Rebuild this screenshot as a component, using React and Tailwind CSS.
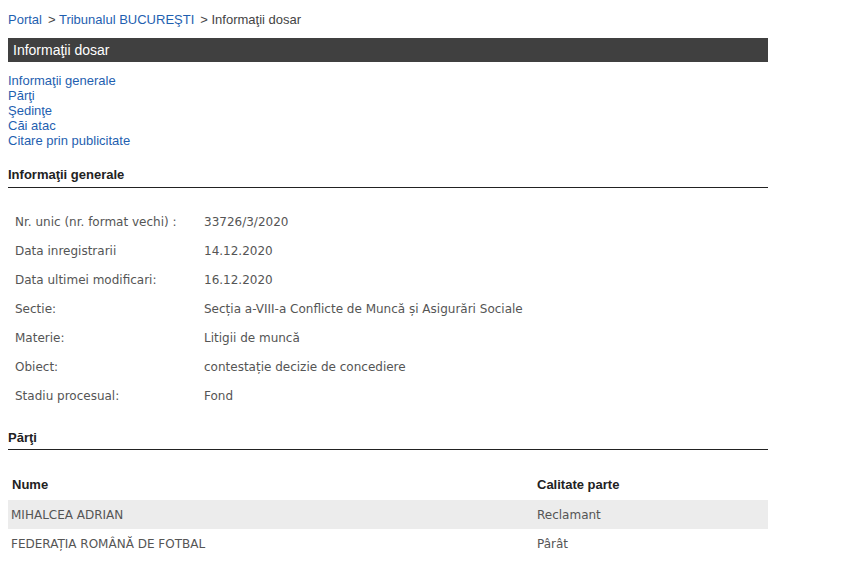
import React from 'react';

const rows = [
  ['Nr. unic (nr. format vechi) :', '33726/3/2020'],
  ['Data inregistrarii', '14.12.2020'],
  ['Data ultimei modificari:', '16.12.2020'],
  ['Sectie:', 'Secția a-VIII-a Conflicte de Muncă și Asigurări Sociale'],
  ['Materie:', 'Litigii de muncă'],
  ['Obiect:', 'contestație decizie de concediere'],
  ['Stadiu procesual:', 'Fond'],
];

const parti = [
  ['MIHALCEA ADRIAN', 'Reclamant'],
  ['FEDERAȚIA ROMÂNĂ DE FOTBAL', 'Pârât'],
];

const links = ['Informaţii generale', 'Părţi', 'Şedinţe', 'Căi atac', 'Citare prin publicitate'];

const App = () => {
  return (
    <div className="min-h-screen bg-white px-2 font-['Liberation_Sans',Arial,sans-serif]">
      <div className="w-[760px]">
        {/* Breadcrumb */}
        <div className="pt-[12px] h-[38px] text-[13px] leading-[16px] text-[#444]">
          <a className="text-[#1f5fb0]">Portal</a>
          <span className="ml-[6px]">&gt; </span>
          <a className="text-[#1f5fb0]">Tribunalul BUCUREŞTI</a>
          <span className="ml-[6px]">&gt; Informaţii dosar</span>
        </div>

        {/* Title bar */}
        <div className="h-[24px] bg-[#404040] px-[5px] text-[14px] leading-[24px] text-white">
          Informaţii dosar
        </div>

        {/* Anchors */}
        <div className="mt-[11px] flex flex-col text-[13px] leading-[15px] text-[#1f5fb0]">
          {links.map((l) => (
            <a key={l}>{l}</a>
          ))}
        </div>

        {/* Informatii generale */}
        <div className="mt-[19px] border-b border-[#222] pb-[4px] text-[13px] font-bold leading-[16px] text-[#222]">
          Informaţii generale
        </div>
        <div className="mt-[19px] font-['DejaVu_Sans',sans-serif] text-[12px] text-[#555]">
          {rows.map(([k, v]) => (
            <div key={k} className="flex h-[29px] items-center">
              <div className="w-[196px] pl-[7px]">{k}</div>
              <div>{v}</div>
            </div>
          ))}
        </div>

        {/* Parti */}
        <div className="mt-[20px] border-b border-[#222] pb-[3px] text-[13px] font-bold leading-[16px] text-[#222]">
          Părţi
        </div>
        <div className="mt-[19px] font-['DejaVu_Sans',sans-serif] text-[12px]">
          <div className="flex h-[31px] items-center font-['Liberation_Sans',Arial,sans-serif] text-[13px] font-bold text-[#222]">
            <div className="w-[529px] pl-[4px]">Nume</div>
            <div>Calitate parte</div>
          </div>
          {parti.map(([n, c], i) => (
            <div key={n} className={`flex h-[29px] items-center text-[#555] ${i === 0 ? 'bg-[#ececec]' : ''}`}>
              <div className="w-[529px] pl-[3px]">{n}</div>
              <div>{c}</div>
            </div>
          ))}
        </div>
      </div>
    </div>
  );
};

export default App;
